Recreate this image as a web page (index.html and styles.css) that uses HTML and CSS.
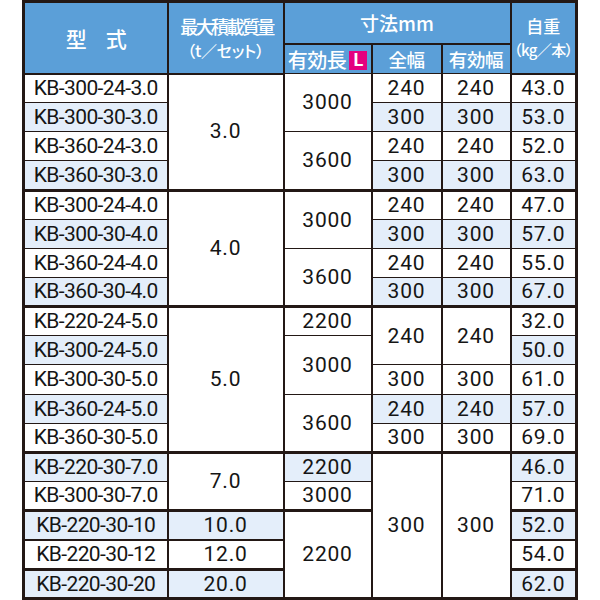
FILE: index.html
```html
<!DOCTYPE html>
<html lang="ja">
<head>
<meta charset="utf-8">
<title>KB 仕様表</title>
<link rel="stylesheet" href="styles.css">
</head>
<body>
<table class="spec">
  <colgroup>
    <col class="w1"><col class="w2"><col class="w3"><col class="w4"><col class="w5"><col class="w6">
  </colgroup>
  <thead>
    <tr class="h1">
      <th rowspan="2" class="big">型　式</th>
      <th rowspan="2"><span class="l1 cond">最大積載質量</span><span class="l2">（t／セット）</span></th>
      <th colspan="3" class="dim">寸法mm</th>
      <th rowspan="2"><span class="l1">自重</span><span class="l2 kg">（kg／本）</span></th>
    </tr>
    <tr class="h2">
      <th class="sub len"><span class="lenwrap"><span>有効長</span><span class="badge">L</span></span></th>
      <th class="sub">全幅</th>
      <th class="sub">有効幅</th>
    </tr>
  </thead>
  <tbody>
    <tr class="r29">
      <td class="m">KB-300-24-3.0</td><td rowspan="4">3.0</td><td rowspan="2">3000</td><td>240</td><td>240</td><td>43.0</td>
    </tr>
    <tr class="r29">
      <td class="m s">KB-300-30-3.0</td><td class="s">300</td><td class="s">300</td><td class="s">53.0</td>
    </tr>
    <tr class="r29">
      <td class="m">KB-360-24-3.0</td><td rowspan="2">3600</td><td>240</td><td>240</td><td>52.0</td>
    </tr>
    <tr class="r30">
      <td class="m s">KB-360-30-3.0</td><td class="s">300</td><td class="s">300</td><td class="s">63.0</td>
    </tr>

    <tr class="r29 g">
      <td class="m">KB-300-24-4.0</td><td rowspan="4">4.0</td><td rowspan="2">3000</td><td>240</td><td>240</td><td>47.0</td>
    </tr>
    <tr class="r29">
      <td class="m s">KB-300-30-4.0</td><td class="s">300</td><td class="s">300</td><td class="s">57.0</td>
    </tr>
    <tr class="r29">
      <td class="m">KB-360-24-4.0</td><td rowspan="2">3600</td><td>240</td><td>240</td><td>55.0</td>
    </tr>
    <tr class="r29">
      <td class="m s">KB-360-30-4.0</td><td class="s">300</td><td class="s">300</td><td class="s">67.0</td>
    </tr>

    <tr class="r29 g">
      <td class="m">KB-220-24-5.0</td><td rowspan="5">5.0</td><td>2200</td><td rowspan="2">240</td><td rowspan="2">240</td><td>32.0</td>
    </tr>
    <tr class="r29">
      <td class="m s">KB-300-24-5.0</td><td rowspan="2">3000</td><td class="s">50.0</td>
    </tr>
    <tr class="r30">
      <td class="m">KB-300-30-5.0</td><td>300</td><td>300</td><td>61.0</td>
    </tr>
    <tr class="r29">
      <td class="m s">KB-360-24-5.0</td><td rowspan="2">3600</td><td class="s">240</td><td class="s">240</td><td class="s">57.0</td>
    </tr>
    <tr class="r29">
      <td class="m">KB-360-30-5.0</td><td>300</td><td>300</td><td>69.0</td>
    </tr>

    <tr class="r29 g">
      <td class="m s">KB-220-30-7.0</td><td rowspan="2">7.0</td><td class="s">2200</td><td rowspan="5">300</td><td rowspan="5">300</td><td class="s">46.0</td>
    </tr>
    <tr class="r29">
      <td class="m">KB-300-30-7.0</td><td>3000</td><td>71.0</td>
    </tr>
    <tr class="r29 g">
      <td class="m s">KB-220-30-10</td><td class="s">10.0</td><td rowspan="3">2200</td><td class="s">52.0</td>
    </tr>
    <tr class="r30 md">
      <td class="m">KB-220-30-12</td><td>12.0</td><td>54.0</td>
    </tr>
    <tr class="r29 g">
      <td class="m s">KB-220-30-20</td><td class="s">20.0</td><td class="s">62.0</td>
    </tr>
  </tbody>
</table>
</body>
</html>
```

FILE: styles.css
```css
html, body {
  margin: 0;
  padding: 0;
  background: #ffffff;
}

.spec {
  border-collapse: collapse;
  table-layout: fixed;
  width: 556px;
  margin: 0 0 0 22px;
  border: 3px solid #231815;
  font-family: Roboto, "Noto Sans CJK JP", sans-serif;
  color: #151515;
}

.w1 { width: 144px; }
.w2 { width: 116px; }
.w3 { width: 88px; }
.w4 { width: 70px; }
.w5 { width: 69px; }
.w6 { width: 66px; }

.spec th {
  background: #5b9fd8;
  color: #ffffff;
  font-family: "Noto Sans CJK JP", sans-serif;
  font-weight: 500;
  font-feature-settings: "palt";
  border: 2px solid #231815;
  padding: 0;
  text-align: center;
  vertical-align: middle;
  line-height: 24px;
}

.h1 { height: 42px; }
.h2 { height: 30px; }

.spec thead tr.h2 th {
  border-bottom: 1px solid #231815;
}

.big {
  font-size: 21px;
  letter-spacing: -1px;
}

.l1, .l2 {
  display: block;
  font-size: 17px;
  white-space: nowrap;
}

.cond {
  font-size: 18px;
  letter-spacing: -2.6px;
  margin-right: -2px;
}

.l2 {
  font-size: 16px;
  letter-spacing: -0.3px;
}

.l2.kg {
  font-size: 15px;
  letter-spacing: -0.6px;
}

.dim {
  font-size: 19px;
}

.sub {
  font-size: 18.5px;
  letter-spacing: -0.4px;
  white-space: nowrap;
}

.sub.len {
  font-size: 20px;
  letter-spacing: -0.5px;
}

.lenwrap {
  display: inline-flex;
  align-items: center;
  gap: 3px;
  vertical-align: middle;
}

.badge {
  display: flex;
  align-items: center;
  justify-content: center;
  flex: 0 0 18px;
  width: 18px;
  height: 19px;
  background: #e4007f;
  color: #ffffff;
  font-family: Roboto, sans-serif;
  font-size: 18px;
  font-weight: 700;
  line-height: 1;
  letter-spacing: 0;
}

.spec td {
  border-left: 2px solid #231815;
  border-right: 2px solid #231815;
  border-top: 1px solid #231815;
  border-bottom: 1px solid #231815;
  padding: 0;
  text-align: center;
  vertical-align: middle;
  font-size: 21px;
  line-height: 1;
  letter-spacing: 0.8px;
  background: #ffffff;
}

.spec td.m {
  letter-spacing: -0.6px;
}

.spec td.s {
  background: #e4eefa;
}

.r29 { height: 29px; }
.r30 { height: 30px; }

.spec tr.g td {
  border-top: 3px solid #231815;
}

.spec tr.md td {
  border-top: 2px solid #231815;
}
```
